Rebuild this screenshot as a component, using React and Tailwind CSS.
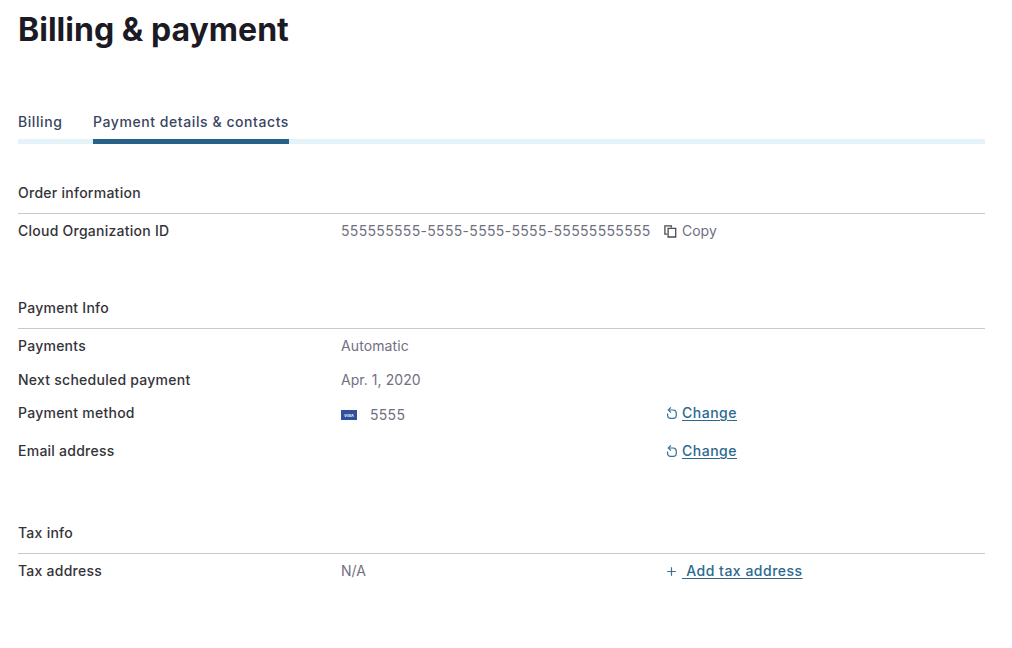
function CopyIcon() {
  return (
    <svg className="h-[13px] w-[13px]" viewBox="0 0 13 13" fill="none" stroke="#4b4b50" strokeWidth="1.3">
      <path d="M3.2 9.2H0.9V0.9H7.4V2.6" />
      <path d="M4.1 3.3H11.7V12H4.1Z" />
    </svg>
  );
}

function ResetIcon() {
  return (
    <svg className="h-[13px] w-[12px]" viewBox="0 0 12 13" fill="none" stroke="#347196" strokeWidth="1.2">
      <path d="M2.6 3H7.2Q10.3 3.2 10.3 6.2V8.2Q10.3 11.3 7.2 11.3H4.7Q1.6 11.3 1.6 8.2V6.4" />
      <path d="M4.9 0.4L2.3 3L4.9 5.6" />
    </svg>
  );
}

function PlusIcon() {
  return (
    <svg className="h-[10px] w-[10px]" viewBox="0 0 10 10" fill="none" stroke="#347196" strokeWidth="1.2">
      <path d="M1.2 5.5H9.8M5.5 1.2V9.8" />
    </svg>
  );
}

function CardBadge() {
  return (
    <svg className="h-[10px] w-4" viewBox="0 0 16 10">
      <rect width="16" height="10" fill="#31509b" />
      <text x="8" y="6.6" textAnchor="middle" fontSize="4" fontStyle="italic" fontWeight="800" fill="#dfe5f5">VISA</text>
    </svg>
  );
}

function Section({ title, className, children }) {
  return (
    <section className={className}>
      <h2 className="h-[31px] border-b border-[#c9c9c9] text-[14px] leading-5 font-medium tracking-[0.26px]">{title}</h2>
      {children}
    </section>
  );
}

function Row({ label, className, children }) {
  return (
    <div className={`grid h-5 grid-cols-[323px_325px_1fr] items-start ${className}`}>
      <div className="text-[14px] leading-5 font-[550] tracking-[0.25px]">{label}</div>
      {children}
    </div>
  );
}

function Change() {
  return (
    <div className="flex h-5 items-center gap-1 text-[#2b698f]">
      <ResetIcon />
      <a href="#" className="text-[14px] leading-5 font-[550] tracking-[0.5px] underline underline-offset-2">Change</a>
    </div>
  );
}

const value = "text-[14px] leading-5 font-[370] text-[#70707f]";

export default function App() {
  return (
    <main className="h-[648px] w-[1012px] overflow-hidden bg-white pr-[27px] pl-[18px] font-['Inter',sans-serif] text-[#343438]">
      <h1 className="pt-[10px] text-[32px] leading-10 font-bold tracking-[0.03px] text-[#1b1a25]">Billing &amp; payment</h1>
      <nav className="mt-[61px] flex h-[33px] gap-[31px] shadow-[inset_0_-5px_0_#e4f2fa] text-[14px] leading-[21px] font-medium tracking-[0.57px] text-[#394561]">
        <a href="#" className="w-11">Billing</a>
        <a href="#" className="w-[196px] border-b-5 border-[#276089] whitespace-nowrap">Payment details &amp; contacts</a>
      </nav>

      <Section title="Order information" className="mt-[39px]">
        <Row label="Cloud Organization ID" className="mt-[7px]">
          <div className={`${value} tracking-[0.32px]`}>555555555-5555-5555-5555-55555555555</div>
          <div className="-ml-[2px] flex items-center gap-[5px]">
            <CopyIcon />
            <span className={value}>Copy</span>
          </div>
        </Row>
      </Section>

      <Section title="Payment Info" className="mt-[57px]">
        <Row label="Payments" className="mt-[7px]">
          <div className={`${value} tracking-[0.1px]`}>Automatic</div>
        </Row>
        <Row label="Next scheduled payment" className="mt-[14px]">
          <div className={`${value} tracking-[0.05px]`}>Apr. 1, 2020</div>
        </Row>
        <Row label="Payment method" className="mt-[13px]">
          <div className="flex h-6 items-center gap-[13px]">
            <CardBadge />
            <span className={`${value} tracking-[0.3px]`}>5555</span>
          </div>
          <Change />
        </Row>
        <Row label="Email address" className="mt-[18px]">
          <div />
          <Change />
        </Row>
      </Section>

      <Section title="Tax info" className="mt-[62px]">
        <Row label="Tax address" className="mt-[7px]">
          <div className={value}>N/A</div>
          <div className="flex items-center gap-[6px] text-[#2b698f]">
            <PlusIcon />
            <a href="#" className="text-[14px] leading-5 font-[550] tracking-[0.5px] whitespace-pre underline underline-offset-2">{" Add tax address"}</a>
          </div>
        </Row>
      </Section>
    </main>
  );
}
